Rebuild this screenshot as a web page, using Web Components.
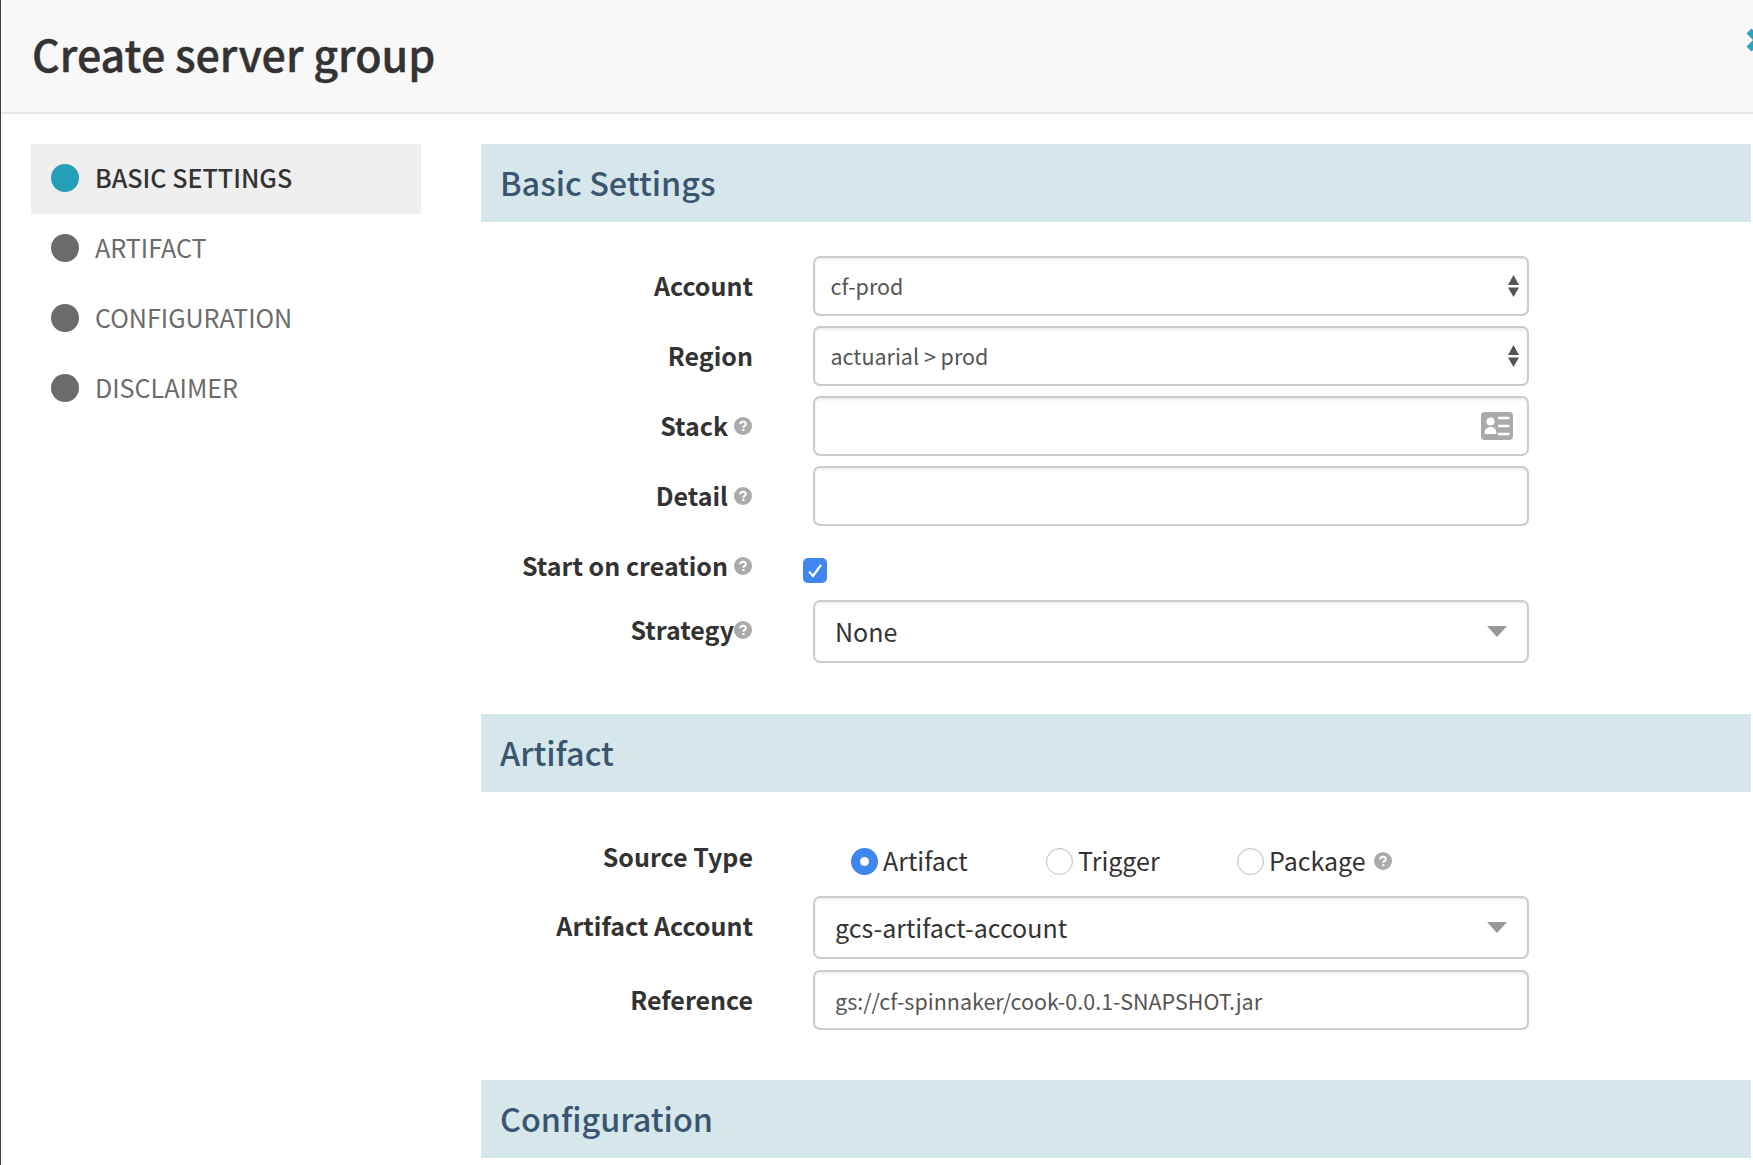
<!DOCTYPE html>
<html>
<head>
<meta charset="utf-8">
<title>Create server group</title>
<style>
  html, body { margin: 0; height: 100%; background: #fff; overflow: hidden; }
  body { font-family: "Noto Sans CJK JP", "Source Sans Pro", "Noto Sans", sans-serif; color: #333; }
</style>
</head>
<body>
<server-group-modal>
  <modal-header slot="header">Create server group</modal-header>
  <wizard-nav slot="nav">
    <nav-item active>BASIC SETTINGS</nav-item>
    <nav-item>ARTIFACT</nav-item>
    <nav-item>CONFIGURATION</nav-item>
    <nav-item>DISCLAIMER</nav-item>
  </wizard-nav>

  <wizard-section title="Basic Settings" pad-bottom="51">
    <form-row label="Account"><select-box spin small>cf-prod</select-box></form-row>
    <form-row label="Region"><select-box spin small>actuarial &gt; prod</select-box></form-row>
    <form-row label="Stack" help><text-input card></text-input></form-row>
    <form-row label="Detail" help><text-input></text-input></form-row>
    <form-row label="Start on creation" help height="54"><check-box></check-box></form-row>
    <form-row label="Strategy" help tight height="63" gap="0"><select-box>None</select-box></form-row>
  </wizard-section>

  <wizard-section title="Artifact" pad-bottom="50">
    <form-row label="Source Type" gap="10" label-top="1">
      <radio-group>
        <radio-opt checked>Artifact</radio-opt>
        <radio-opt>Trigger</radio-opt>
        <radio-opt help>Package</radio-opt>
      </radio-group>
    </form-row>
    <form-row label="Artifact Account" height="63" gap="11"><select-box>gcs-artifact-account</select-box></form-row>
    <form-row label="Reference" gap="0"><text-input value="gs://cf-spinnaker/cook-0.0.1-SNAPSHOT.jar"></text-input></form-row>
  </wizard-section>

  <wizard-section title="Configuration" pad-bottom="0"></wizard-section>
</server-group-modal>

<script>
class ServerGroupModal extends HTMLElement {
  constructor() {
    super();
    this.attachShadow({ mode: 'open' });
    this.shadowRoot.innerHTML = `
      <style>
        :host { display: block; height: 1165px; border-left: 1px solid #3a3f45; box-sizing: border-box; overflow: hidden; }
        #body { display: grid; grid-template-columns: 390px 1270px; column-gap: 60px; padding: 30px 0 0 30px; }
      </style>
      <slot name="header"></slot>
      <div id="body">
        <slot name="nav"></slot>
        <div><slot></slot></div>
      </div>
    `;
  }
}

class ModalHeader extends HTMLElement {
  constructor() {
    super();
    this.attachShadow({ mode: 'open' });
    this.shadowRoot.innerHTML = `
      <style>
        :host { display: flex; align-items: center; justify-content: space-between; height: 114px; box-sizing: border-box;
          background: #f8f8f8; border-bottom: 2px solid #e6e6e6; padding-left: 31px; overflow: hidden; }
        h3 { margin: 0 0 5px; font-size: 43px; font-weight: 500; line-height: 1; color: #333; -webkit-text-stroke: .4px #333; }
        svg { display: block; margin: 0 -17px 32px 0; }
      </style>
      <h3><slot></slot></h3>
      <svg width="24" height="24" viewBox="0 0 24 24"><path d="M3 3l18 18M21 3L3 21" stroke="#2aa3ba" stroke-width="7" fill="none"/></svg>
    `;
  }
}

class WizardNav extends HTMLElement {
  constructor() {
    super();
    this.attachShadow({ mode: 'open' });
    this.shadowRoot.innerHTML = `
      <style>:host { display: flex; flex-direction: column; }</style>
      <slot></slot>
    `;
  }
}

class NavItem extends HTMLElement {
  constructor() {
    super();
    this.attachShadow({ mode: 'open' });
    this.shadowRoot.innerHTML = `
      <style>
        :host { display: flex; align-items: center; height: 70px; padding-left: 20px; box-sizing: border-box;
          font-size: 25.1px; color: #6b6b6b; }
        :host([active]) { background: #efefef; color: #333; font-weight: 500; }
        i { width: 28px; height: 28px; border-radius: 50%; background: #6b6b6b; margin: 0 16px 2px 0; flex: none; }
        :host([active]) i { background: #239fb8; }
        span { margin-bottom: 4px; }
      </style>
      <i></i><span><slot></slot></span>
    `;
  }
}

class WizardSection extends HTMLElement {
  constructor() {
    super();
    this.attachShadow({ mode: 'open' });
    this.shadowRoot.innerHTML = `
      <style>
        :host { display: block; }
        h4 { margin: 0; height: 78px; box-sizing: border-box; display: flex; align-items: center; padding: 0 0 2px 19px; background: #d6e7ec;
          color: #3a5570; font-size: 32.4px; font-weight: 500; line-height: 1; }
        #rows { display: flex; flex-direction: column; padding-top: 34px; }
      </style>
      <h4>${this.getAttribute('title')}</h4>
      <div id="rows" style="padding-bottom:${this.getAttribute('pad-bottom')}px"><slot></slot></div>
    `;
  }
}

class HelpIcon extends HTMLElement {
  constructor() {
    super();
    this.attachShadow({ mode: 'open' });
    this.shadowRoot.innerHTML = `
      <style>
        :host { display: inline-flex; flex: none; }
        svg { display: block; }
      </style>
      <svg width="18" height="18" viewBox="0 0 18 18">
        <circle cx="9" cy="9" r="9" fill="#aaa"/>
        <path d="M6.2 7.2c0-1.6 1.2-2.5 2.8-2.5s2.8.9 2.8 2.3c0 1.2-.8 1.7-1.5 2.2-.6.4-.9.8-.9 1.6" stroke="#fff" stroke-width="2" fill="none"/>
        <rect x="8.3" y="12" width="2.1" height="2.1" fill="#fff"/>
      </svg>
    `;
  }
}

class FormRow extends HTMLElement {
  constructor() {
    super();
    this.attachShadow({ mode: 'open' });
    const help = this.hasAttribute('help') ? '<help-icon></help-icon>' : '';
    const height = this.getAttribute('height') || 60;
    const gap = this.getAttribute('gap') || 10;
    const top = this.getAttribute('label-top') || 0;
    this.shadowRoot.innerHTML = `
      <style>
        :host { display: grid; grid-template-columns: 272px 716px; column-gap: 60px; }
        label { display: flex; align-items: center; justify-content: flex-end; gap: 6px; font-size: 25px; font-weight: 700;
          color: #333; height: 60px; line-height: 1; }
        label span { margin-bottom: 2px; }
        help-icon { margin-right: 1px; }
        :host([tight]) label { gap: 0; }
      </style>
      <label style="margin-top:${top}px"><span>${this.getAttribute('label')}</span>${help}</label>
      <div style="height:${height}px"><slot></slot></div>
    `;
    this.style.gridTemplateRows = height + 'px';
    this.style.marginBottom = gap + 'px';
  }
}

class SelectBox extends HTMLElement {
  constructor() {
    super();
    this.attachShadow({ mode: 'open' });
    const arrow = this.hasAttribute('spin')
      ? `<svg width="11" height="22" viewBox="0 0 11 22"><path d="M5.5 0L11 10H0z M0 12.5h11L5.5 22z" fill="#555"/></svg>`
      : `<svg width="20" height="11" viewBox="0 0 20 11"><path d="M0 0h20L10 11z" fill="#999"/></svg>`;
    this.shadowRoot.innerHTML = `
      <style>
        :host { display: flex; align-items: center; justify-content: space-between; height: 100%; box-sizing: border-box;
          border: 2px solid #ccc; border-radius: 7px; background: #fff; padding: 0 20px; color: #333; font-size: 25px;
          box-shadow: inset 0 2px 3px rgba(0,0,0,.07); }
        :host([small]) { font-size: 21.5px; color: #555; padding: 0 8px 0 15.5px; }
        span { line-height: 1; margin-bottom: 1px; }
        svg { display: block; flex: none; }
      </style>
      <span><slot></slot></span>${arrow}
    `;
  }
}

class TextInput extends HTMLElement {
  constructor() {
    super();
    this.attachShadow({ mode: 'open' });
    const card = this.hasAttribute('card')
      ? `<svg width="32" height="28" viewBox="0 0 32 28">
          <rect width="32" height="28" rx="4" fill="#aaa"/>
          <circle cx="9.5" cy="9.5" r="4" fill="#fff"/>
          <path d="M3.5 22c0-5 2.5-7 6-7s6 2 6 7z" fill="#fff"/>
          <path d="M17 6h11.5M17 14h11.5M17 22h11.5" stroke="#fff" stroke-width="2.4"/>
        </svg>` : '';
    this.shadowRoot.innerHTML = `
      <style>
        :host { display: flex; align-items: center; justify-content: space-between; height: 100%; box-sizing: border-box;
          border: 2px solid #ccc; border-radius: 7px; background: #fff; padding: 0 14px 0 20px; color: #555; font-size: 21.5px;
          box-shadow: inset 0 2px 3px rgba(0,0,0,.07); }
        span { line-height: 1; margin-top: 1px; }
        svg { display: block; }
      </style>
      <span>${this.getAttribute('value') || ''}</span>${card}
    `;
  }
}

class CheckBox extends HTMLElement {
  constructor() {
    super();
    this.attachShadow({ mode: 'open' });
    this.shadowRoot.innerHTML = `
      <style>
        :host { display: block; width: 24px; height: 25px; margin: 22px 0 0 -10px; }
        svg { display: block; }
      </style>
      <svg width="24" height="25" viewBox="0 0 24 25">
        <rect width="24" height="25" rx="5" fill="#3f86ee"/>
        <path d="M6 13.5l4 4.5 8-11" stroke="#fff" stroke-width="2.2" fill="none"/>
      </svg>
    `;
  }
}

class RadioGroup extends HTMLElement {
  constructor() {
    super();
    this.attachShadow({ mode: 'open' });
    this.shadowRoot.innerHTML = `
      <style>:host { display: flex; padding: 13px 0 0 38px; }</style>
      <slot></slot>
    `;
  }
}

class RadioOpt extends HTMLElement {
  constructor() {
    super();
    this.attachShadow({ mode: 'open' });
    const help = this.hasAttribute('help') ? '<help-icon></help-icon>' : '';
    this.shadowRoot.innerHTML = `
      <style>
        :host { display: flex; align-items: center; gap: 5px; height: 44px; width: 195px; font-size: 25px; color: #333; }
        :host(:nth-of-type(2)) { width: 191px; }
        i { width: 27px; height: 27px; flex: none; box-sizing: border-box; border: 1.5px solid #bdbdbd; border-radius: 50%; background: #fff; display: block;
          box-shadow: inset 0 1px 2px rgba(0,0,0,.06); }
        :host([checked]) i { border: 9px solid #3f86ee; box-shadow: none; }
        help-icon { margin: 0 0 0 3px; }
        span { line-height: 1; margin-bottom: 1px; }
      </style>
      <i></i><span><slot></slot></span>${help}
    `;
  }
}

customElements.define('server-group-modal', ServerGroupModal);
customElements.define('modal-header', ModalHeader);
customElements.define('wizard-nav', WizardNav);
customElements.define('nav-item', NavItem);
customElements.define('wizard-section', WizardSection);
customElements.define('help-icon', HelpIcon);
customElements.define('form-row', FormRow);
customElements.define('select-box', SelectBox);
customElements.define('text-input', TextInput);
customElements.define('check-box', CheckBox);
customElements.define('radio-group', RadioGroup);
customElements.define('radio-opt', RadioOpt);
</script>
</body>
</html>
